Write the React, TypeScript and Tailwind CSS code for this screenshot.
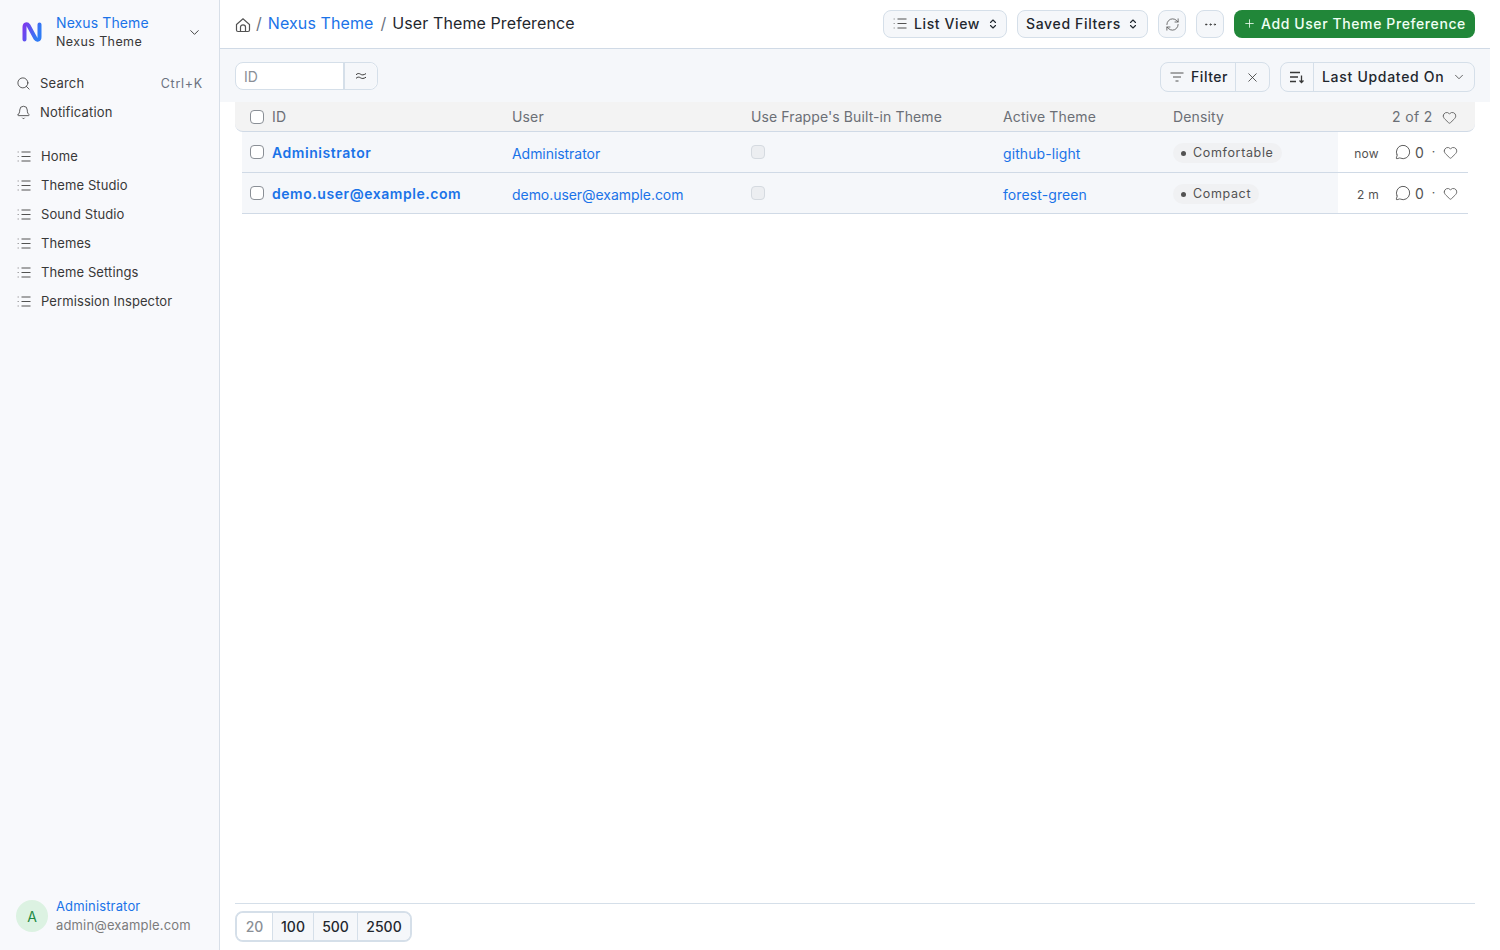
import { Bell, ChevronDown, ChevronsUpDown, Ellipsis, Heart, MessageCircle, Plus, RefreshCw, Search, X } from "lucide-react";

const navItems = ["Home", "Theme Studio", "Sound Studio", "Themes", "Theme Settings", "Permission Inspector"];

const rows = [
  { id: "Administrator", user: "Administrator", theme: "github-light", density: "Comfortable", time: "now" },
  { id: "demo.user@example.com", user: "demo.user@example.com", theme: "forest-green", density: "Compact", time: "2 m" },
];

function ListIcon({ className }: { className?: string }) {
  return (
    <svg viewBox="0 0 14 14" fill="none" className={className} stroke="currentColor">
      <path d="M4.500 2h9M4.500 6.500h9M4.500 11h9" />
      <path d="M.5 2h1.500M.5 6.500h1.500M.5 11h1.500" strokeOpacity="0.5" />
    </svg>
  );
}

function FilterIcon({ className }: { className?: string }) {
  return (
    <svg viewBox="0 0 14 14" fill="none" stroke="currentColor" className={className}>
      <path d="M.5 3h13M3 7h8M5.500 11h3" />
    </svg>
  );
}

function SortIcon({ className }: { className?: string }) {
  return (
    <svg viewBox="0 0 16 16" fill="none" stroke="currentColor" strokeWidth="1.300" className={className}>
      <path d="M1 3.500h10M1 8h8M1 12.500h6" />
      <path d="M12.500 6.500v7M10.500 11.500l2 2 2-2" />
    </svg>
  );
}

function Logo() {
  return (
    <svg viewBox="0 0 20 20" fill="none" className="h-[20px] w-[20px]">
      <defs>
        <linearGradient id="nexus" x1="0" y1="0" x2="1" y2="0.4">
          <stop offset="0" stopColor="#7c3aed" />
          <stop offset="1" stopColor="#2f7bf5" />
        </linearGradient>
      </defs>
      <path
        d="M2.500 17.500V5C2.500 2 5.200 1.500 6.500 3.500l7 13c1.300 2 4 1.500 4-1.500V2.500"
        stroke="url(#nexus)"
        strokeWidth="4"
        strokeLinecap="round"
      />
    </svg>
  );
}

function Checkbox({ disabled }: { disabled?: boolean }) {
  return (
    <span
      className={
        disabled
          ? "block h-[14px] w-[14px] rounded-[4px] border border-[#d5dae0] bg-[#eceef1]"
          : "block h-[14px] w-[14px] rounded-[4px] border border-[#8a8f96] bg-white"
      }
    />
  );
}

function Sidebar() {
  return (
    <aside className="flex h-[950px] w-[220px] shrink-0 flex-col border-r border-[#d8dfe8] bg-[#f8f9fc]">
      <div className="flex h-[64px] items-center pl-[22px] pr-[17px]">
        <Logo />
        <div className="ml-[14px] flex-1">
          <div className="text-[14px] leading-[20px] tracking-[0.1px] text-[#1a73e8]">Nexus Theme</div>
          <div className="text-[12.500px] leading-[18px] tracking-[0.4px] text-[#383838]">Nexus Theme</div>
        </div>
        <ChevronDown className="h-[15px] w-[15px] text-[#383838]" strokeWidth={1.500} />
      </div>
      <div className="mt-[5px] px-[16px]">
        <div className="flex h-[29px] items-center">
          <Search className="h-[15px] w-[15px] text-[#383838]" strokeWidth={1.300} />
          <span className="ml-[9px] flex-1 pt-[1px] text-[13px] tracking-[0.2px] text-[#383838]">Search</span>
          <span className="pt-[2px] text-[12.500px] tracking-[0.75px] text-[#6b7280]">Ctrl+K</span>
        </div>
        <div className="flex h-[29px] items-center">
          <Bell className="h-[15px] w-[15px] text-[#383838]" strokeWidth={1.300} />
          <span className="ml-[9px] pt-[1px] text-[13px] tracking-[0.15px] text-[#383838]">Notification</span>
        </div>
      </div>
      <nav className="mt-[15px] px-[17px]">
        {navItems.map((item) => (
          <div key={item} className="flex h-[29px] items-center">
            <ListIcon className="h-[14px] w-[14px] text-[#525252]" />
            <span className="ml-[10px] pt-[1px] text-[13px] tracking-[0.1px] text-[#383838]">{item}</span>
          </div>
        ))}
      </nav>
      <div className="mt-auto flex h-[50px] items-start pl-[16px]">
        <div className="flex h-[32px] w-[32px] items-center justify-center rounded-full bg-[#dcf2e2] text-[14px] text-[#1f8a45]">A</div>
        <div className="ml-[8px] -mt-[3px]">
          <div className="text-[13px] leading-[19px] tracking-[0.15px] text-[#1a73e8]">Administrator</div>
          <div className="text-[13px] leading-[19px] tracking-[0.15px] text-[#7c7c7c]">admin@example.com</div>
        </div>
      </div>
    </aside>
  );
}

function Header() {
  return (
    <header className="flex h-[49px] items-center border-b border-[#d0dae6] bg-white pl-[15px] pr-[15px]">
      <svg viewBox="0 0 16 16" fill="none" stroke="#525252" strokeWidth="1.200" className="mt-[2px] h-[16px] w-[16px]">
        <path d="M1.500 7.500L8 1.800l6.500 5.700v5.500c0 1-.6 1.500-1.500 1.500H3c-.9 0-1.500-.5-1.500-1.500V7.500z" />
        <path d="M5.500 14.500V10c0-1.300 1-2.200 2.500-2.200s2.500.9 2.500 2.200v4.500" />
      </svg>
      <div className="-mt-[2px] flex items-center">
        <span className="ml-[5px] text-[16px] text-[#6b7280]">/</span>
        <span className="ml-[6px] text-[16px] tracking-[0.1px] text-[#1a73e8]">Nexus Theme</span>
        <span className="ml-[7px] text-[16px] text-[#6b7280]">/</span>
        <span className="ml-[6px] text-[16px] tracking-[0.1px] text-[#1f272e]">User Theme Preference</span>
      </div>
      <div className="ml-auto flex items-center">
        <button className="flex h-[28px] w-[124px] items-center rounded-[8px] border border-[#d5dfe9] bg-[#f5f7fa] pl-[9px] pb-[1px] text-[14px] font-medium tracking-[0.6px] text-[#1f272e]">
          <ListIcon className="h-[14px] w-[14px] text-[#525252]" />
          <span className="ml-[7px]">List View</span>
          <ChevronsUpDown className="ml-[7px] h-[12px] w-[12px]" strokeWidth={2.200} />
        </button>
        <button className="ml-[10px] flex h-[28px] w-[131px] items-center rounded-[8px] border border-[#d5dfe9] bg-[#f5f7fa] pl-[8px] pb-[1px] text-[14px] font-medium tracking-[0.65px] text-[#1f272e]">
          <span>Saved Filters</span>
          <ChevronsUpDown className="ml-[6px] h-[12px] w-[12px]" strokeWidth={2.200} />
        </button>
        <button className="ml-[10px] flex h-[28px] w-[28px] items-center justify-center rounded-[8px] border border-[#d5dfe9] bg-[#f5f7fa]">
          <RefreshCw className="h-[15px] w-[15px] text-[#525252]" strokeWidth={1.300} />
        </button>
        <button className="ml-[10px] flex h-[28px] w-[28px] items-center justify-center rounded-[8px] border border-[#d5dfe9] bg-[#f5f7fa]">
          <Ellipsis className="h-[15px] w-[15px] text-[#383838]" strokeWidth={1.500} />
        </button>
        <button className="ml-[10px] flex h-[28px] w-[241px] items-center rounded-[8px] bg-[#218739] pl-[9px] pb-[1px] text-[14px] font-medium tracking-[0.6px] text-[#f0fff4]">
          <Plus className="h-[13px] w-[13px]" strokeWidth={1.500} />
          <span className="ml-[5px]">Add User Theme Preference</span>
        </button>
      </div>
    </header>
  );
}

function Toolbar() {
  return (
    <div className="flex h-[53px] items-start bg-[#f5f7fa] pl-[15px] pr-[15px] pt-[13px]">
      <div className="flex h-[28px] w-[143px] rounded-[8px] border border-[#d5dfe9] bg-white">
        <span className="flex w-[109px] items-center border-r-2 border-[#d5dfe9] pl-[8px] text-[14px] text-[#8a8f96]">ID</span>
        <span className="flex flex-1 items-center justify-center rounded-r-[8px] bg-[#f5f7fa]">
          <svg viewBox="0 0 12 10" fill="none" stroke="#383838" strokeWidth="1" className="h-[10px] w-[12px]">
            <path d="M1 3.800c1.500-1.600 3-1.600 4.500-.6s3 1 5.500-.6M1 7.400c1.500-1.600 3-1.600 4.500-.6s3 1 5.500-.6" />
          </svg>
        </span>
      </div>
      <div className="ml-auto flex h-[30px] w-[110px] items-center rounded-[8px] border border-[#d5dfe9] bg-[#f5f7fa]">
        <span className="flex h-full flex-1 items-center border-r border-[#d5dfe9] pl-[9px] pb-[1px] text-[14px] font-medium tracking-[0.55px] text-[#1f272e]">
          <FilterIcon className="mt-[1px] h-[14px] w-[14px] text-[#525252]" />
          <span className="ml-[7px]">Filter</span>
        </span>
        <span className="flex w-[33px] items-center justify-center">
          <X className="h-[15px] w-[15px] text-[#383838]" strokeWidth={1.300} />
        </span>
      </div>
      <div className="ml-[10px] flex h-[30px] w-[195px] items-center rounded-[8px] border border-[#d5dfe9] bg-[#f5f7fa]">
        <span className="flex h-full w-[33px] items-center justify-center border-r border-[#d5dfe9]">
          <SortIcon className="h-[16px] w-[16px] text-[#383838]" />
        </span>
        <span className="ml-[8px] pb-[1px] text-[14px] font-medium tracking-[0.7px] text-[#1f272e]">Last Updated On</span>
        <ChevronDown className="ml-[8px] h-[14px] w-[14px] text-[#383838]" strokeWidth={1.300} />
      </div>
    </div>
  );
}

function ListTable() {
  return (
    <div className="flex-1 bg-white pl-[15px] pr-[15px]">
      <div className="flex h-[30px] items-center rounded-[8px] rounded-t-none border-b border-[#d0dae6] bg-[#f3f3f3] text-[14px] tracking-[0.15px] text-[#6b6f76]">
        <span className="ml-[15px]"><Checkbox /></span>
        <span className="ml-[8px] w-[240px]">ID</span>
        <span className="w-[239px]">User</span>
        <span className="w-[252px] tracking-[0.1px]">Use Frappe's Built-in Theme</span>
        <span className="w-[170px]">Active Theme</span>
        <span className="w-[219px]">Density</span>
        <span className="tracking-[0.35px] text-[#6b6f76]">2 of 2</span>
        <Heart className="ml-[9px] mt-[2px] h-[15px] w-[15px] text-[#525252]" strokeWidth={1.300} />
      </div>
      <div className="ml-[7px] mr-[7px]">
        {rows.map((row) => (
          <div key={row.id} className="flex h-[41px] border-b border-[#d0dae6] text-[14px]">
            <div className="flex w-[1096px] items-center bg-[#f5f7fa] pt-[2px]">
              <span className="-mt-[2px] ml-[8px]"><Checkbox /></span>
              <span className="-mt-[2px] ml-[8px] w-[240px] font-semibold tracking-[0.55px] text-[#1a73e8]">{row.id}</span>
              <span className="w-[239px] tracking-[-0.05px] text-[#1a73e8]">{row.user}</span>
              <span className="-mt-[2px] w-[252px]"><Checkbox disabled /></span>
              <span className="w-[170px] tracking-[0.1px] text-[#1a73e8]">{row.theme}</span>
              <span className="inline-flex h-[20px] items-center rounded-full bg-[#f0f1f3] px-[8px] text-[12.500px] tracking-[0.65px] text-[#525252]">
                <span className="h-[5px] w-[5px] rounded-full bg-[#525252]" />
                <span className="ml-[7px]">{row.density}</span>
              </span>
            </div>
            <div className="flex flex-1 items-center bg-white pt-[2px]">
              <span className="w-[41px] pt-[1px] text-right text-[12px] tracking-[0.3px] text-[#525252]">{row.time}</span>
              <MessageCircle className="-mt-[2px] ml-[16px] h-[16px] w-[16px] text-[#383838]" strokeWidth={1.200} />
              <span className="-mt-[2px] ml-[4px] text-[14px] text-[#525252]">0</span>
              <span className="-mt-[2px] ml-[8px] text-[12px] text-[#525252]">·</span>
              <Heart className="-mt-[2px] ml-[8px] h-[15px] w-[15px] text-[#525252]" strokeWidth={1.300} />
            </div>
          </div>
        ))}
      </div>
    </div>
  );
}

function Footer() {
  return (
    <div className="bg-white pl-[15px] pr-[15px]">
      <div className="flex h-[47px] items-start border-t border-[#d5dfe9] pt-[7px]">
        <div className="flex h-[31px] overflow-hidden rounded-[8px] border-2 border-[#d5dfe9] text-[14px] font-medium">
          <span className="flex w-[35px] items-center justify-center bg-white text-[#8a8f96]">20</span>
          <span className="flex w-[41px] items-center justify-center border-l border-[#d5dfe9] bg-[#f5f7fa] text-[#1f272e]">100</span>
          <span className="flex w-[44px] items-center justify-center border-l border-[#d5dfe9] bg-[#f5f7fa] text-[#1f272e]">500</span>
          <span className="flex w-[53px] items-center justify-center border-l border-[#d5dfe9] bg-[#f5f7fa] text-[#1f272e]">2500</span>
        </div>
      </div>
    </div>
  );
}

export default function App() {
  return (
    <div className="flex h-[950px] w-[1490px] bg-white font-['Inter',sans-serif]">
      <Sidebar />
      <main className="flex min-w-0 flex-1 flex-col">
        <Header />
        <Toolbar />
        <ListTable />
        <Footer />
      </main>
    </div>
  );
}
